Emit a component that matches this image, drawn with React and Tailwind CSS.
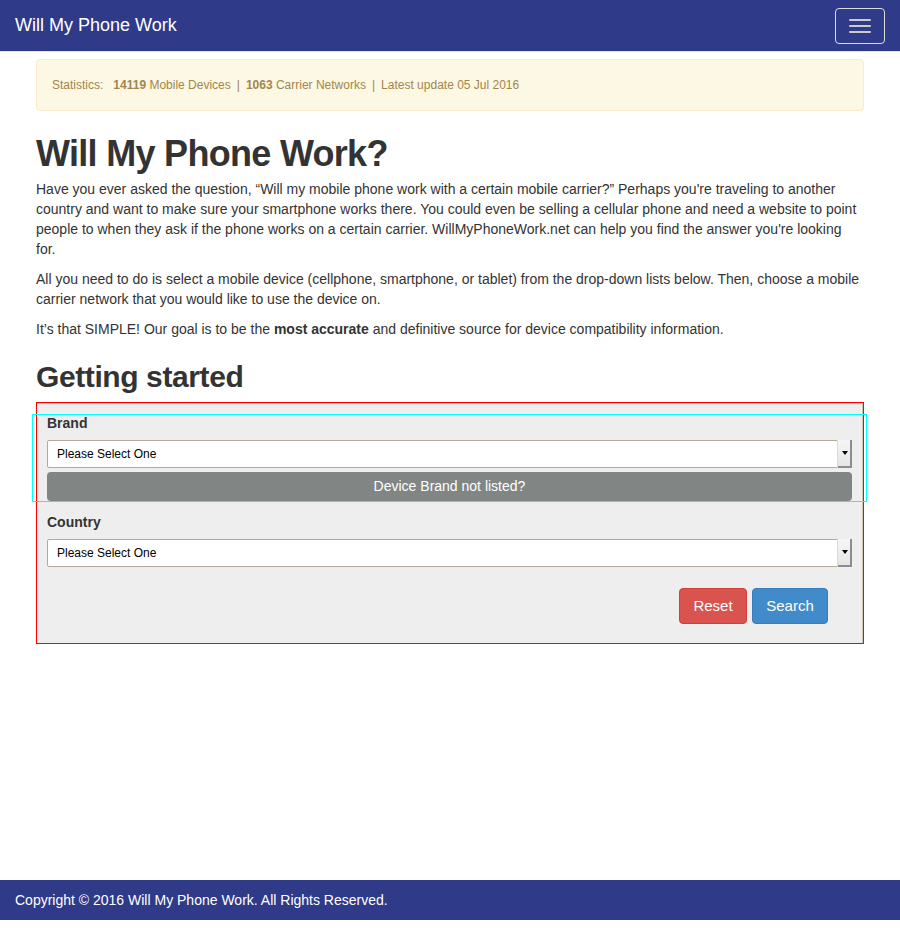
import React from 'react';

const font = { fontFamily: '"Liberation Sans", Arial, sans-serif' };

const SelectBox = () => (
  <div className="relative h-[28px] w-full">
    <select className="h-full w-full appearance-none rounded-[2px] border border-[#b3ab98] bg-white pl-[9px] text-[12px] text-black outline-none">
      <option>Please Select One</option>
    </select>
    <div className="pointer-events-none absolute right-0 top-0 flex h-[28px] w-[15px] items-center justify-center border-l border-[#d9d9d9] bg-gradient-to-b from-[#f6f6f6] to-[#e4e4e4] shadow-[inset_-2px_-2px_0_#8d8d8d]">
      <span className="mb-[2px] block h-0 w-0 border-x-[3px] border-t-[4px] border-x-transparent border-t-black" />
    </div>
  </div>
);

const App = () => {
  return (
    <div className="flex min-h-[920px] flex-col bg-white text-[#333]" style={font}>
      <nav className="flex h-[52px] items-center justify-between border-b border-[#e7e7e7] bg-[#2f3a88] pl-[15px] pr-[15px]">
        <span className="text-[18px] text-white">Will My Phone Work</span>
        <button className="flex h-[36px] w-[50px] flex-col items-center justify-center gap-[4px] rounded-[4px] border border-[#dddddd]">
          <span className="block h-[2px] w-[22px] rounded-[1px] bg-[#cccccc]" />
          <span className="block h-[2px] w-[22px] rounded-[1px] bg-[#cccccc]" />
          <span className="block h-[2px] w-[22px] rounded-[1px] bg-[#cccccc]" />
        </button>
      </nav>

      <main className="px-[36px] pt-[7px]">
        <div className="mb-[20px] rounded-[4px] border border-[#faebcc] bg-[#fcf8e3] px-[15px] py-[15px] text-[12px] leading-[20px] text-[#a3854e]">
          Statistics:<span className="ml-[10px] font-bold">14119</span> Mobile Devices
          <span className="mx-[6px]">|</span>
          <span className="font-bold">1063</span> Carrier Networks
          <span className="mx-[6px]">|</span>
          Latest update 05 Jul 2016
        </div>

        <h1 className="mb-[5px] pt-[3px] text-[36px] font-bold leading-[40px] tracking-[-0.7px]">Will My Phone Work?</h1>
        <div className="text-[14px] leading-[20px]">
          <p className="mb-[10px]">
            Have you ever asked the question, “Will my mobile phone work with a certain mobile carrier?” Perhaps you're traveling to another country and want to make sure your smartphone works there. You could even be selling a cellular phone and need a website to point people to when they ask if the phone works on a certain carrier. WillMyPhoneWork.net can help you find the answer you're looking for.
          </p>
          <p className="mb-[10px]">
            All you need to do is select a mobile device (cellphone, smartphone, or tablet) from the drop-down lists below. Then, choose a mobile carrier network that you would like to use the device on.
          </p>
          <p>
            It’s that SIMPLE! Our goal is to be the <strong>most accurate</strong> and definitive source for device compatibility information.
          </p>
        </div>

        <h2 className="mb-[9px] mt-[21px] text-[30px] font-bold leading-[33px] tracking-[-0.4px]">Getting started</h2>

        <div className="border border-[#ff0000]">
          <div className="border-t border-r border-[#cfc7b4] bg-[#eeeeee] px-[10px] pb-[19px] pt-[10px]">
            <div className="mx-[-15px] border border-[#00ffff] px-[14px]">
              <label className="mb-[9px] block text-[14px] font-bold leading-[16px]">Brand</label>
              <SelectBox />
              <button className="mt-[4px] h-[29px] w-full rounded-[4px] bg-[#818685] text-[14px] text-white">
                Device Brand not listed?
              </button>
            </div>

            <label className="mb-[9px] mt-[12px] block text-[14px] font-bold leading-[16px]">Country</label>
            <SelectBox />

            <div className="mt-[21px] flex justify-end gap-[5px] pr-[24px]">
              <button className="h-[36px] w-[68px] rounded-[4px] border border-[#d43f3a] bg-[#d9534f] text-[15px] text-white">
                Reset
              </button>
              <button className="h-[36px] w-[76px] rounded-[4px] border border-[#357ebd] bg-[#428bca] text-[15px] text-white">
                Search
              </button>
            </div>
          </div>
        </div>
      </main>

      <footer className="mt-auto flex h-[40px] items-center bg-[#2f3a88] px-[15px] text-[14px] text-white">
        Copyright © 2016 Will My Phone Work. All Rights Reserved.
      </footer>
    </div>
  );
};

export default App;
